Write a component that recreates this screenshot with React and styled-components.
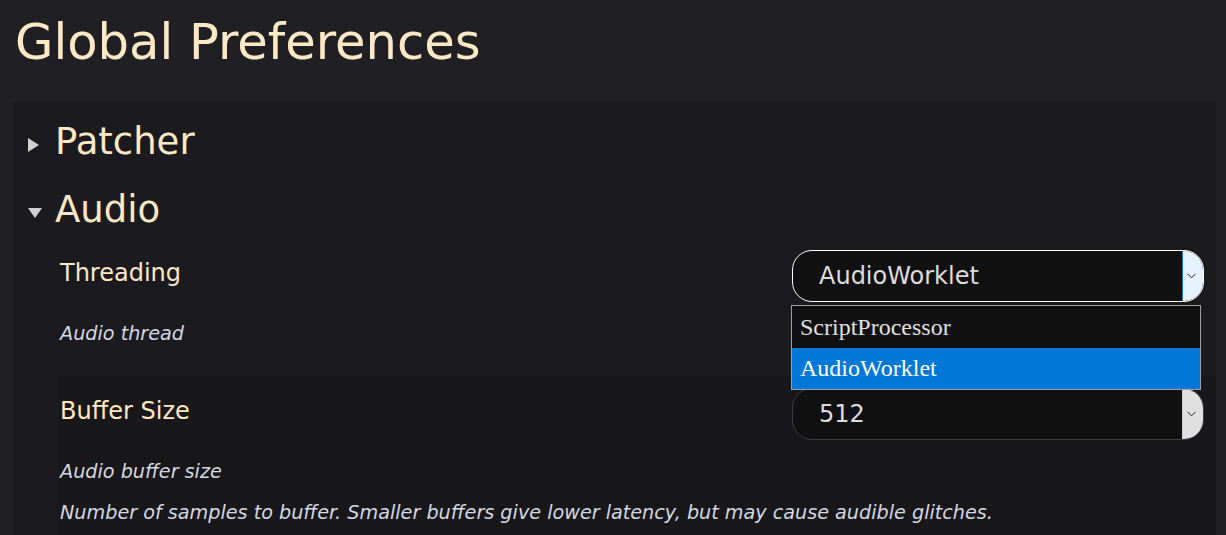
import React from "react";
import styled, { createGlobalStyle } from "styled-components";

const GlobalStyle = createGlobalStyle`
  html, body {
    margin: 0;
    padding: 0;
    background: #201f24;
    font-family: "DejaVu Sans", "Liberation Sans", sans-serif;
  }
  * { box-sizing: border-box; }
`;

const Page = styled.div`
  min-height: 535px;
  overflow: hidden;
`;

const Title = styled.h1`
  margin: 0 0 31px;
  padding: 14px 0 0 15px;
  font-size: 49.6px;
  line-height: 57px;
  font-weight: 400;
  color: #ffe8c4;
`;

const Panel = styled.div`
  margin: 0 10px 0 13px;
  padding-top: 18px;
  background: #1b1a1e;
`;

const Section = styled.section`
  & + & {
    margin-top: 25px;
  }
`;

const Summary = styled.div`
  display: flex;
  align-items: center;
  padding-left: 15px;
  font-size: 37px;
  line-height: 43px;
  font-weight: 400;
  color: #ffe8c4;
  margin-bottom: ${(p) => (p.$open ? "7px" : "0")};
`;

const CaretBox = styled.span`
  display: inline-flex;
  width: 27px;
  justify-content: flex-start;
  align-items: center;
  padding-top: 8px;
`;

const Caret = ({ open }) => (
  <CaretBox>
    {open ? (
      <svg width="14" height="11" viewBox="0 0 14 11">
        <polygon points="0,0 14,0 7,10" fill="#d0d0d0" />
      </svg>
    ) : (
      <svg width="12" height="15" viewBox="0 0 12 15">
        <polygon points="0,0 11,7 0,14" fill="#d0d0d0" />
      </svg>
    )}
  </CaretBox>
);

const Row = styled.div`
  display: flex;
  justify-content: space-between;
  align-items: flex-start;
  margin-left: 46px;
  padding: 12px 12px 12px 1px;
  background: ${(p) => (p.$striped ? "#18171a" : "transparent")};
`;

const Info = styled.div`
  flex: 1;
  min-width: 0;
  display: flex;
  flex-direction: column;
`;

const Label = styled.div`
  margin: 9px 0 36px;
  font-size: 24px;
  line-height: 28px;
  color: #ffe8c4;
`;

const Desc = styled.p`
  margin: 0 0 19px;
  font-size: 19.2px;
  line-height: 22px;
  font-style: italic;
  color: #d3d8e2;
  white-space: nowrap;
`;

const SelectWrap = styled.div`
  position: relative;
  width: 412px;
  flex-shrink: 0;
`;

const SelectBox = styled.div`
  display: flex;
  height: 52px;
  border-radius: 20px;
  overflow: hidden;
  background: #111111;
  border: 1px solid ${(p) => (p.$focused ? "#ffffff" : "#3c3c42")};
`;

const Value = styled.div`
  flex: 1;
  display: flex;
  align-items: center;
  padding-left: 26px;
  font-size: 24px;
  color: #dddddd;
`;

const ArrowBox = styled.div`
  width: 21px;
  display: flex;
  align-items: center;
  justify-content: center;
  padding-right: 3px;
  background: ${(p) => (p.$focused ? "#e5f1fb" : "#e0e0e0")};
  border-left: 1px solid ${(p) => (p.$focused ? "#0078d7" : "#cfcfcf")};
`;

const Chevron = () => (
  <svg width="9" height="6" viewBox="0 0 9 6">
    <polyline points="0.5,0.8 4.5,4.8 8.5,0.8" fill="none" stroke="#222" strokeWidth="1" />
  </svg>
);

const Listbox = styled.ul`
  position: absolute;
  top: 55px;
  left: -1px;
  width: 410px;
  margin: 0;
  padding: 0;
  list-style: none;
  background: #111111;
  border: 1px solid #a0a0a0;
  z-index: 5;
`;

const Option = styled.li`
  height: ${(p) => (p.$selected ? "41px" : "42px")};
  display: flex;
  align-items: center;
  padding-left: 8px;
  font-family: "Liberation Serif", "Times New Roman", serif;
  font-size: 24px;
  color: ${(p) => (p.$selected ? "#ffffff" : "#e0e0e0")};
  background: ${(p) => (p.$selected ? "#0078d7" : "transparent")};
`;

const Select = ({ value, focused, options }) => (
  <SelectWrap>
    <SelectBox $focused={focused}>
      <Value>{value}</Value>
      <ArrowBox $focused={focused}>
        <Chevron />
      </ArrowBox>
    </SelectBox>
    {options && (
      <Listbox>
        {options.map((o) => (
          <Option key={o} $selected={o === value}>
            {o}
          </Option>
        ))}
      </Listbox>
    )}
  </SelectWrap>
);

export default function App() {
  return (
    <Page>
      <GlobalStyle />
      <Title>Global Preferences</Title>
      <Panel>
        <Section>
          <Summary>
            <Caret open={false} />
            Patcher
          </Summary>
        </Section>
        <Section>
          <Summary $open>
            <Caret open />
            Audio
          </Summary>
          <Row>
            <Info>
              <Label>Threading</Label>
              <Desc>Audio thread</Desc>
            </Info>
            <Select
              value="AudioWorklet"
              focused
              options={["ScriptProcessor", "AudioWorklet"]}
            />
          </Row>
          <Row $striped>
            <Info>
              <Label>Buffer Size</Label>
              <Desc>Audio buffer size</Desc>
              <Desc>
                Number of samples to buffer. Smaller buffers give lower latency, but may cause audible glitches.
              </Desc>
            </Info>
            <Select value="512" />
          </Row>
        </Section>
      </Panel>
    </Page>
  );
}
